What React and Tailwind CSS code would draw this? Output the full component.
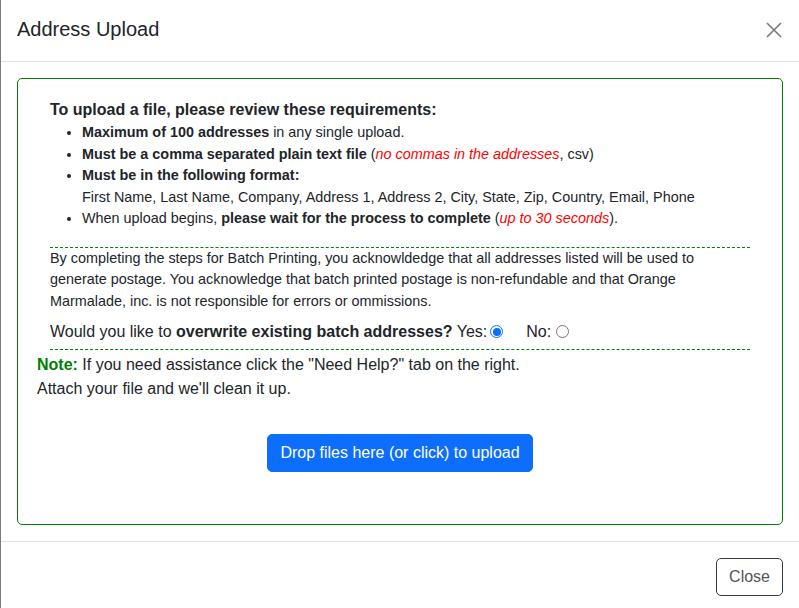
import React from "react";

function Radio({ checked, className = "" }) {
  return checked ? (
    <span className={"inline-block w-[13px] h-[13px] rounded-full border-[1.5px] border-[#0d6efd] bg-white p-[1.5px] align-[-1px] " + className}>
      <span className="block w-full h-full rounded-full bg-[#0d6efd]" />
    </span>
  ) : (
    <span className={"inline-block w-[13px] h-[13px] rounded-full border border-[#767676] bg-white align-[-1px] " + className} />
  );
}

export default function App() {
  return (
    <div className="w-[799px] h-[608px] overflow-hidden flex bg-white text-[#212529] font-['Liberation_Sans',Arial,sans-serif]">
      <div className="w-px shrink-0 bg-[#7d7d7d]" />
      <div className="flex-1 flex flex-col">
        <div className="h-[62px] shrink-0 border-b border-[#dee2e6] flex items-center justify-between px-4">
          <h5 className="text-[20px] leading-[30px] -mt-[3px]">Address Upload</h5>
          <svg width="16" height="16" viewBox="0 0 16 16" className="-mt-[2px] mr-[1px]">
            <path d="M1 1L15 15M15 1L1 15" stroke="#7a7a7a" strokeWidth="1.6" />
          </svg>
        </div>
        <div className="p-4">
          <div className="h-[447px] border border-[#008000] rounded-[5px] px-[19px] pt-[19px]">
            <div className="max-w-[700px] mx-auto">
              <div className="text-[16px] leading-[24px] font-bold">To upload a file, please review these requirements:</div>
              <ul className="list-disc pl-8 text-[14.4px] leading-[21.5px]">
                <li>
                  <b>Maximum of 100 addresses</b> in any single upload.
                </li>
                <li>
                  <b>Must be a comma separated plain text file</b> (
                  <i className="text-[#ff0000]">no commas in the addresses</i>, csv)
                </li>
                <li>
                  <b>Must be in the following format:</b>
                  <br />
                  First Name, Last Name, Company, Address 1, Address 2, City, State, Zip, Country, Email, Phone
                </li>
                <li>
                  When upload begins, <b>please wait for the process to complete</b> (
                  <i className="text-[#ff0000]">up to 30 seconds</i>).
                </li>
              </ul>
              <div className="mt-[17px] border-t border-dashed border-[#008000] text-[14.4px] leading-[21.5px] pt-0">
                By completing the steps for Batch Printing, you acknowldedge that all addresses listed will be used to generate postage. You acknowledge that batch printed postage is non-refundable and that Orange Marmalade, inc. is not responsible for errors or ommissions.
              </div>
              <div className="mt-[8px] pb-[5px] text-[16px] leading-[24px] border-b border-dashed border-[#008000]">
                Would you like to <b>overwrite existing batch addresses?</b> Yes:<Radio checked className="ml-[3px]" />
                <span className="ml-[23px]">No:</span><Radio className="ml-[5px]" />
              </div>
            </div>
            <div className="mt-[3px] text-[16px] leading-[24px]">
              <b className="text-[#008000]">Note:</b> If you need assistance click the "Need Help?" tab on the right.
              <br />
              Attach your file and we'll clean it up.
            </div>
            <div className="mt-[33px] flex justify-center">
              <button className="bg-[#0d6efd] border border-[#0d6efd] text-white text-[16px] leading-[24px] px-3 py-[6px] rounded-[5px]">
                Drop files here (or click) to upload
              </button>
            </div>
          </div>
        </div>
        <div className="border-t border-[#dee2e6] p-3 flex justify-end">
          <button className="m-1 border border-[#343a40] text-[#555] text-[16px] leading-[24px] px-3 py-[6px] rounded-[5px]">
            Close
          </button>
        </div>
      </div>
    </div>
  );
}
